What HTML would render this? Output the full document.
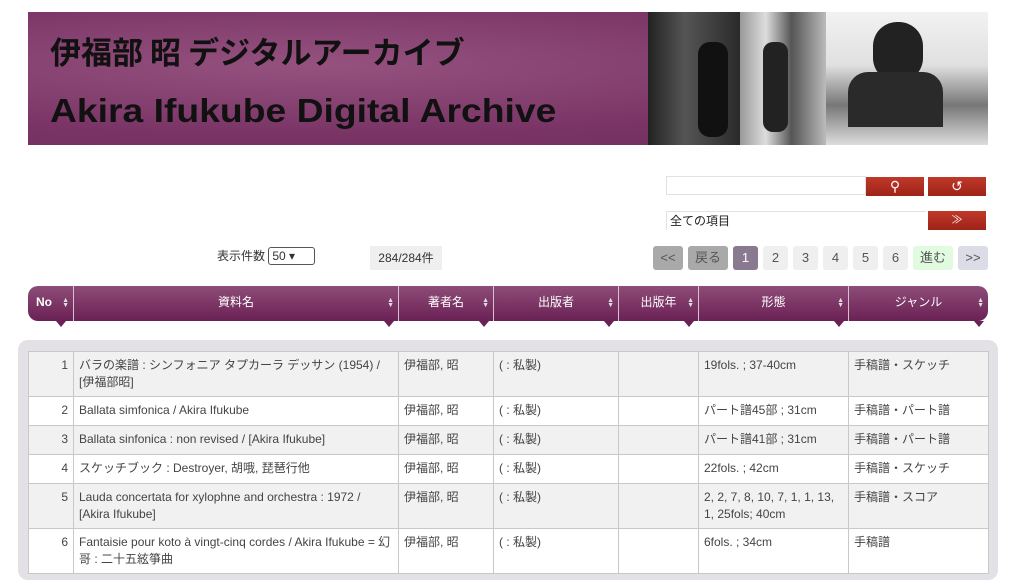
<!DOCTYPE html>
<html><head><meta charset="utf-8"><style>
*{box-sizing:border-box;margin:0;padding:0}
body{width:1016px;height:572px;overflow:hidden;background:#fff;font-family:"Liberation Sans","Noto Sans CJK JP",sans-serif;font-size:12px;color:#333;position:relative}
.ban{position:absolute;left:28px;top:12px;width:960px;height:133px;background:radial-gradient(ellipse at 30% 40%,#95527f,#7a3566 60%,#6b2c5a);overflow:hidden}
.ban .t1{position:absolute;left:22px;top:16px;font-size:31px;font-weight:bold;color:#111;font-family:"Noto Sans CJK JP",sans-serif;letter-spacing:0px}
.ban .t2{position:absolute;left:22px;top:80px;font-size:33px;font-weight:bold;color:#111;transform:scaleX(1.13);transform-origin:left}
.ph{position:absolute;top:0;height:133px}
.abs{position:absolute}
.btn{position:absolute;background:linear-gradient(#c0392b,#9e2318);height:19px;color:#fff;text-align:center;font-size:14px;line-height:19px}
.pg{position:absolute;top:246px;height:24px;line-height:24px;text-align:center;font-size:13px;border-radius:3px;color:#555;background:#efefef}
.hd{position:absolute;left:28px;top:286px;width:960px;height:35px;background:linear-gradient(#8e4c78,#6a2155);border-radius:10px}
.hd div{position:absolute;top:0;height:35px;line-height:33px;color:#fff;text-align:center;font-size:12px;border-left:1px solid #d8c0d0}
.hd div:first-child{border-left:none}
.hd i{position:absolute;right:4px;top:12px;font-style:normal;font-size:7px;line-height:5px;color:#ddd}
.hd b.a{position:absolute;bottom:-6px;width:0;height:0;border-left:5px solid transparent;border-right:5px solid transparent;border-top:6px solid #6a2155}
.box{position:absolute;left:18px;top:340px;width:980px;height:240px;background:#e3e1e6;border-radius:10px}
table{position:absolute;left:28px;top:351px;width:960px;border-collapse:collapse;table-layout:fixed}
td{border:1px solid #c8c8c8;vertical-align:top;padding:5px 5px 0 5px;font-size:12px;line-height:17px;color:#444}
tr.o td{background:#fff}tr.e td{background:#f1f1f1}
td.n{text-align:right}
</style></head><body>
<div class="ban">
<div class="t1">伊福部 昭 デジタルアーカイブ</div>
<div class="t2">Akira Ifukube Digital Archive</div>
<div class="ph" style="left:620px;width:92px;background:linear-gradient(90deg,#222,#555 40%,#2a2a2a)"></div>
<div class="ph" style="left:712px;width:86px;background:linear-gradient(90deg,#999,#ddd 30%,#555 60%,#bbb)"></div>
<div class="ph" style="left:798px;width:162px;background:linear-gradient(#f2f2f2,#e0e0e0 40%,#777 70%,#ddd)"></div>
<div class="abs" style="left:845px;top:10px;width:50px;height:60px;border-radius:24px;background:#222"></div>
<div class="abs" style="left:820px;top:60px;width:95px;height:55px;border-radius:20px 20px 0 0;background:#2a2a2a"></div>
<div class="abs" style="left:670px;top:30px;width:30px;height:95px;border-radius:12px;background:#111"></div>
<div class="abs" style="left:735px;top:30px;width:25px;height:90px;border-radius:10px;background:#222"></div>
</div>
<div class="abs" style="left:666px;top:176px;width:200px;height:19px;border:1px solid #e2e2e2"></div>
<div class="btn" style="left:866px;top:177px;width:58px">⚲</div>
<div class="btn" style="left:928px;top:177px;width:58px">↺</div>
<div class="abs" style="left:666px;top:211px;width:260px;height:19px;border-top:1px solid #e2e2e2;border-left:1px solid #e2e2e2;font-size:12px;line-height:18px;padding-left:3px;color:#222">全ての項目</div>
<div class="btn" style="left:928px;top:211px;width:58px;font-size:11px">≫</div>
<div class="abs" style="left:217px;top:247px;font-size:12px;color:#333">表示件数 <span style="display:inline-block;border:1px solid #555;border-radius:3px;padding:1px 3px;width:47px;font-size:12px">50 ▾</span></div>
<div class="abs" style="left:370px;top:246px;width:72px;height:24px;line-height:24px;background:#efefef;text-align:center;font-size:12px">284/284件</div>
<div class="pg" style="left:653px;width:30px;background:#a9a9a9">&lt;&lt;</div>
<div class="pg" style="left:688px;width:40px;background:#a9a9a9">戻る</div>
<div class="pg" style="left:733px;width:25px;background:#8a7a90;color:#fff">1</div>
<div class="pg" style="left:763px;width:25px">2</div>
<div class="pg" style="left:793px;width:25px">3</div>
<div class="pg" style="left:823px;width:25px">4</div>
<div class="pg" style="left:853px;width:25px">5</div>
<div class="pg" style="left:883px;width:25px">6</div>
<div class="pg" style="left:913px;width:40px;background:#e0fbe0">進む</div>
<div class="pg" style="left:958px;width:30px;background:#dcdce6">&gt;&gt;</div>
<div class="hd">
<div style="left:0;width:45px;text-align:left;padding-left:8px;font-weight:bold">No<i>▲<br>▼</i><b class="a" style="left:28px"></b></div>
<div style="left:45px;width:325px">資料名<i>▲<br>▼</i><b class="a" style="right:4px"></b></div>
<div style="left:370px;width:95px">著者名<i>▲<br>▼</i><b class="a" style="right:4px"></b></div>
<div style="left:465px;width:125px">出版者<i>▲<br>▼</i><b class="a" style="right:4px"></b></div>
<div style="left:590px;width:80px">出版年<i>▲<br>▼</i><b class="a" style="right:4px"></b></div>
<div style="left:670px;width:150px">形態<i>▲<br>▼</i><b class="a" style="right:4px"></b></div>
<div style="left:820px;width:140px">ジャンル<i>▲<br>▼</i><b class="a" style="right:4px"></b></div>
</div>
<div class="box"></div>
<table>
<colgroup><col style="width:45px"><col style="width:325px"><col style="width:95px"><col style="width:125px"><col style="width:80px"><col style="width:150px"><col style="width:140px"></colgroup>
<tr class="e" style="height:45px"><td class="n">1</td><td>バラの楽譜 : シンフォニア タプカーラ デッサン (1954) / [伊福部昭]</td><td>伊福部, 昭</td><td>( : 私製)</td><td></td><td>19fols. ; 37-40cm</td><td>手稿譜・スケッチ</td></tr>
<tr class="o" style="height:29px"><td class="n">2</td><td>Ballata simfonica / Akira Ifukube</td><td>伊福部, 昭</td><td>( : 私製)</td><td></td><td>パート譜45部 ; 31cm</td><td>手稿譜・パート譜</td></tr>
<tr class="e" style="height:29px"><td class="n">3</td><td>Ballata sinfonica : non revised / [Akira Ifukube]</td><td>伊福部, 昭</td><td>( : 私製)</td><td></td><td>パート譜41部 ; 31cm</td><td>手稿譜・パート譜</td></tr>
<tr class="o" style="height:29px"><td class="n">4</td><td>スケッチブック : Destroyer, 胡哦, 琵琶行他</td><td>伊福部, 昭</td><td>( : 私製)</td><td></td><td>22fols. ; 42cm</td><td>手稿譜・スケッチ</td></tr>
<tr class="e" style="height:45px"><td class="n">5</td><td>Lauda concertata for xylophne and orchestra : 1972 / [Akira Ifukube]</td><td>伊福部, 昭</td><td>( : 私製)</td><td></td><td>2, 2, 7, 8, 10, 7, 1, 1, 13, 1, 25fols; 40cm</td><td>手稿譜・スコア</td></tr>
<tr class="o" style="height:45px"><td class="n">6</td><td>Fantaisie pour koto à vingt-cinq cordes / Akira Ifukube = 幻哥 : 二十五絃箏曲</td><td>伊福部, 昭</td><td>( : 私製)</td><td></td><td>6fols. ; 34cm</td><td>手稿譜</td></tr>
</table>
</body></html>
